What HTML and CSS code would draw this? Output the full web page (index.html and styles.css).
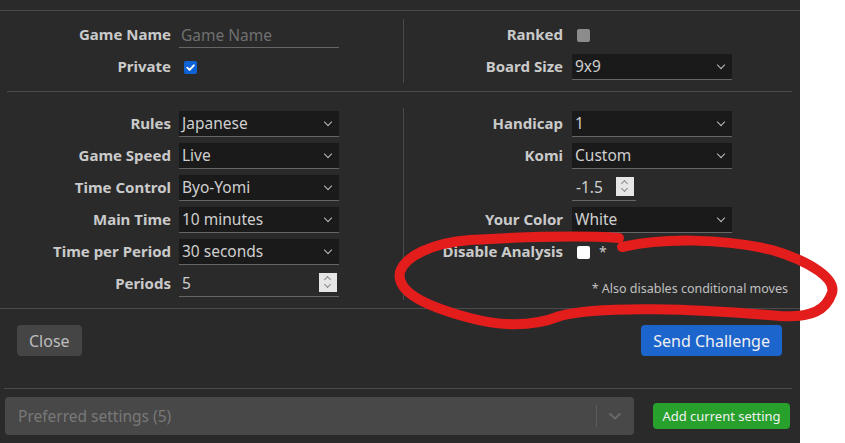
FILE: index.html
```html
<!DOCTYPE html>
<html lang="en">
<head>
    <meta charset="UTF-8">
    <title>Challenge</title>
    <link rel="stylesheet" href="styles.css">
</head>
<body>
    <div class="modal">
        <div class="modal-top"></div>

        <div class="section first">
            <div class="col left">
                <div class="row">
                    <label>Game Name</label>
                    <input type="text" class="text-input" placeholder="Game Name">
                </div>
                <div class="row">
                    <label>Private</label>
                    <span class="check checked"><svg viewBox="0 0 14 14" width="14" height="14"><path d="M3.5 7.2 L6 9.6 L10.6 4.6" fill="none" stroke="#fff" stroke-width="2" stroke-linecap="round" stroke-linejoin="round"/></svg></span>
                </div>
            </div>
            <div class="col right">
                <div class="row">
                    <label>Ranked</label>
                    <span class="check disabled"></span>
                </div>
                <div class="row">
                    <label>Board Size</label>
                    <div class="select">9x9<span class="chev"></span></div>
                </div>
            </div>
        </div>
        <div class="rule inset"></div>

        <div class="section second">
            <div class="col left">
                <div class="row"><label>Rules</label><div class="select">Japanese<span class="chev"></span></div></div>
                <div class="row"><label>Game Speed</label><div class="select">Live<span class="chev"></span></div></div>
                <div class="row"><label>Time Control</label><div class="select">Byo-Yomi<span class="chev"></span></div></div>
                <div class="row"><label>Main Time</label><div class="select">10 minutes<span class="chev"></span></div></div>
                <div class="row"><label>Time per Period</label><div class="select">30 seconds<span class="chev"></span></div></div>
                <div class="row">
                    <label>Periods</label>
                    <div class="number">5<span class="spin"></span></div>
                </div>
            </div>
            <div class="col right">
                <div class="row"><label>Handicap</label><div class="select">1<span class="chev"></span></div></div>
                <div class="row"><label>Komi</label><div class="select">Custom<span class="chev"></span></div></div>
                <div class="row">
                    <label></label>
                    <div class="number short">-1.5<span class="spin"></span></div>
                </div>
                <div class="row"><label>Your Color</label><div class="select">White<span class="chev"></span></div></div>
                <div class="row">
                    <label>Disable Analysis</label>
                    <span class="check blank"></span><span class="star">*</span>
                </div>
                <div class="note">* Also disables conditional moves</div>
            </div>
        </div>
        <div class="rule"></div>

        <div class="footer">
            <button class="btn close">Close</button>
            <button class="btn send">Send Challenge</button>
        </div>
        <div class="rule short"></div>

        <div class="preferred">
            <div class="pref-select">
                <span class="pref-text">Preferred settings (5)</span>
                <span class="pref-sep"></span>
                <svg class="pref-chev" viewBox="0 0 14 8" width="14" height="8"><path d="M1.5 1.5 L7 6.5 L12.5 1.5" fill="none" stroke="#6a6a6a" stroke-width="2"/></svg>
            </div>
            <button class="btn add">Add current setting</button>
        </div>
    </div>

    <svg class="scribble" width="845" height="443" viewBox="0 0 845 443">
        <path d="M619 238 C590 236 540 236 470 240 C432 243 405 256 400 272 C396 292 425 306 470 318 C500 326 532 327 560 316 C600 305 700 309 780 316 C812 318 826 310 832 293 C836 279 812 262 772 250 C722 238 662 238 622 247" fill="none" stroke="#e31c1c" stroke-width="10" stroke-linecap="round" stroke-linejoin="round"/>
    </svg>
</body>
</html>
```

FILE: styles.css
```css
body {
    margin: 0;
    background: #fff;
    font-family: "Noto Sans", "Open Sans", sans-serif;
    overflow: hidden;
}
.modal {
    width: 800px;
    height: 443px;
    background: #2a2a2a;
    color: #c8c8c8;
}
.modal-top {
    height: 10px;
    border-bottom: 1px solid #4a4a4a;
}
.section {
    display: flex;
}
.section.first {
    padding: 8px 0;
}
.section.second {
    padding: 16px 0 8px;
}
.col.left {
    width: 396px;
    padding-left: 7px;
    border-right: 1px solid #4a4a4a;
}
.col.right {
    flex: 1;
}
.row {
    display: flex;
    align-items: center;
    height: 32px;
}
.row label {
    font-weight: bold;
    font-size: 15px;
    text-align: right;
    color: #cacaca;
    margin-bottom: 2px;
}
.left .row label {
    width: 164px;
    margin-right: 8px;
}
.right .row label {
    width: 159px;
    margin-right: 9px;
}
.text-input {
    width: 160px;
    height: 26px;
    box-sizing: border-box;
    background: transparent;
    border: none;
    border-bottom: 1px solid #666;
    color: #ccc;
    font-family: inherit;
    font-size: 15.5px;
    padding: 0 2px;
    outline: none;
}
.text-input::placeholder {
    color: #707070;
}
.select {
    position: relative;
    width: 160px;
    height: 26px;
    box-sizing: border-box;
    background: #1a1a1a;
    border-bottom: 1px solid #666;
    font-size: 15.5px;
    line-height: 25px;
    padding-left: 3px;
    color: #cfcfcf;
}
.chev {
    position: absolute;
    right: 8px;
    top: 8px;
    width: 5px;
    height: 5px;
    border-right: 1.5px solid #bbb;
    border-bottom: 1.5px solid #bbb;
    transform: rotate(45deg);
}
.number {
    position: relative;
    width: 160px;
    height: 26px;
    box-sizing: border-box;
    border-bottom: 1px solid #666;
    font-size: 15.5px;
    line-height: 25px;
    padding-left: 3px;
    color: #cfcfcf;
}
.number.short {
    width: 64px;
    padding-left: 4px;
}
.spin {
    position: absolute;
    right: 2px;
    top: 2px;
    width: 18px;
    height: 19px;
    background: #e6e6e6;
}
.spin::before,
.spin::after {
    content: "";
    position: absolute;
    left: 6px;
    width: 4px;
    height: 4px;
    border-left: 1.3px solid #888;
    border-top: 1.3px solid #888;
}
.spin::before {
    top: 4px;
    transform: rotate(45deg);
}
.spin::after {
    top: 9px;
    transform: rotate(225deg);
}
.check {
    display: inline-block;
    width: 13px;
    height: 13px;
    border-radius: 2px;
    margin-left: 5px;
}
.check.checked {
    background: #0f62d6;
}
.check.checked svg {
    display: block;
    width: 13px;
    height: 13px;
}
.check.disabled {
    background: #8c8c8c;
}
.check.blank {
    background: #fff;
}
.star {
    margin-left: 9px;
    font-size: 14px;
    color: #c8c8c8;
    align-self: flex-start;
    margin-top: 6px;
}
.note {
    margin-top: 13px;
    font-size: 12.5px;
    line-height: 16px;
    text-align: right;
    padding-right: 12px;
    color: #c0c0c0;
}
.rule {
    border-top: 1px solid #4a4a4a;
}
.rule.inset {
    margin: 0 8px 0 7px;
}
.rule.short {
    margin: 0 8px 0 4px;
}
.footer {
    display: flex;
    justify-content: space-between;
    padding: 16px 18px 32px 17px;
}
.btn {
    border: none;
    border-radius: 4px;
    font-family: inherit;
    font-size: 16px;
    height: 31px;
    padding: 0 12px;
}
.btn.close {
    background: #454545;
    color: #bdbdbd;
}
.btn.send {
    background: #1c65cd;
    color: #f0f0f0;
}
.preferred {
    display: flex;
    align-items: center;
    padding: 8px 10px 0 5px;
}
.pref-select {
    display: flex;
    align-items: center;
    width: 629px;
    height: 38px;
    background: #484848;
    border-radius: 4px;
}
.pref-text {
    flex: 1;
    padding-left: 13px;
    font-size: 15.5px;
    color: #787878;
}
.pref-sep {
    width: 1px;
    height: 22px;
    background: #5c5c5c;
}
.pref-chev {
    margin: 0 12px 0 11px;
}
.btn.add {
    margin-left: auto;
    height: 26px;
    width: 137px;
    padding: 0;
    font-size: 13px;
    background: #27a02c;
    color: #f2f2f2;
}
.scribble {
    position: absolute;
    left: 0;
    top: 0;
    pointer-events: none;
}
```
